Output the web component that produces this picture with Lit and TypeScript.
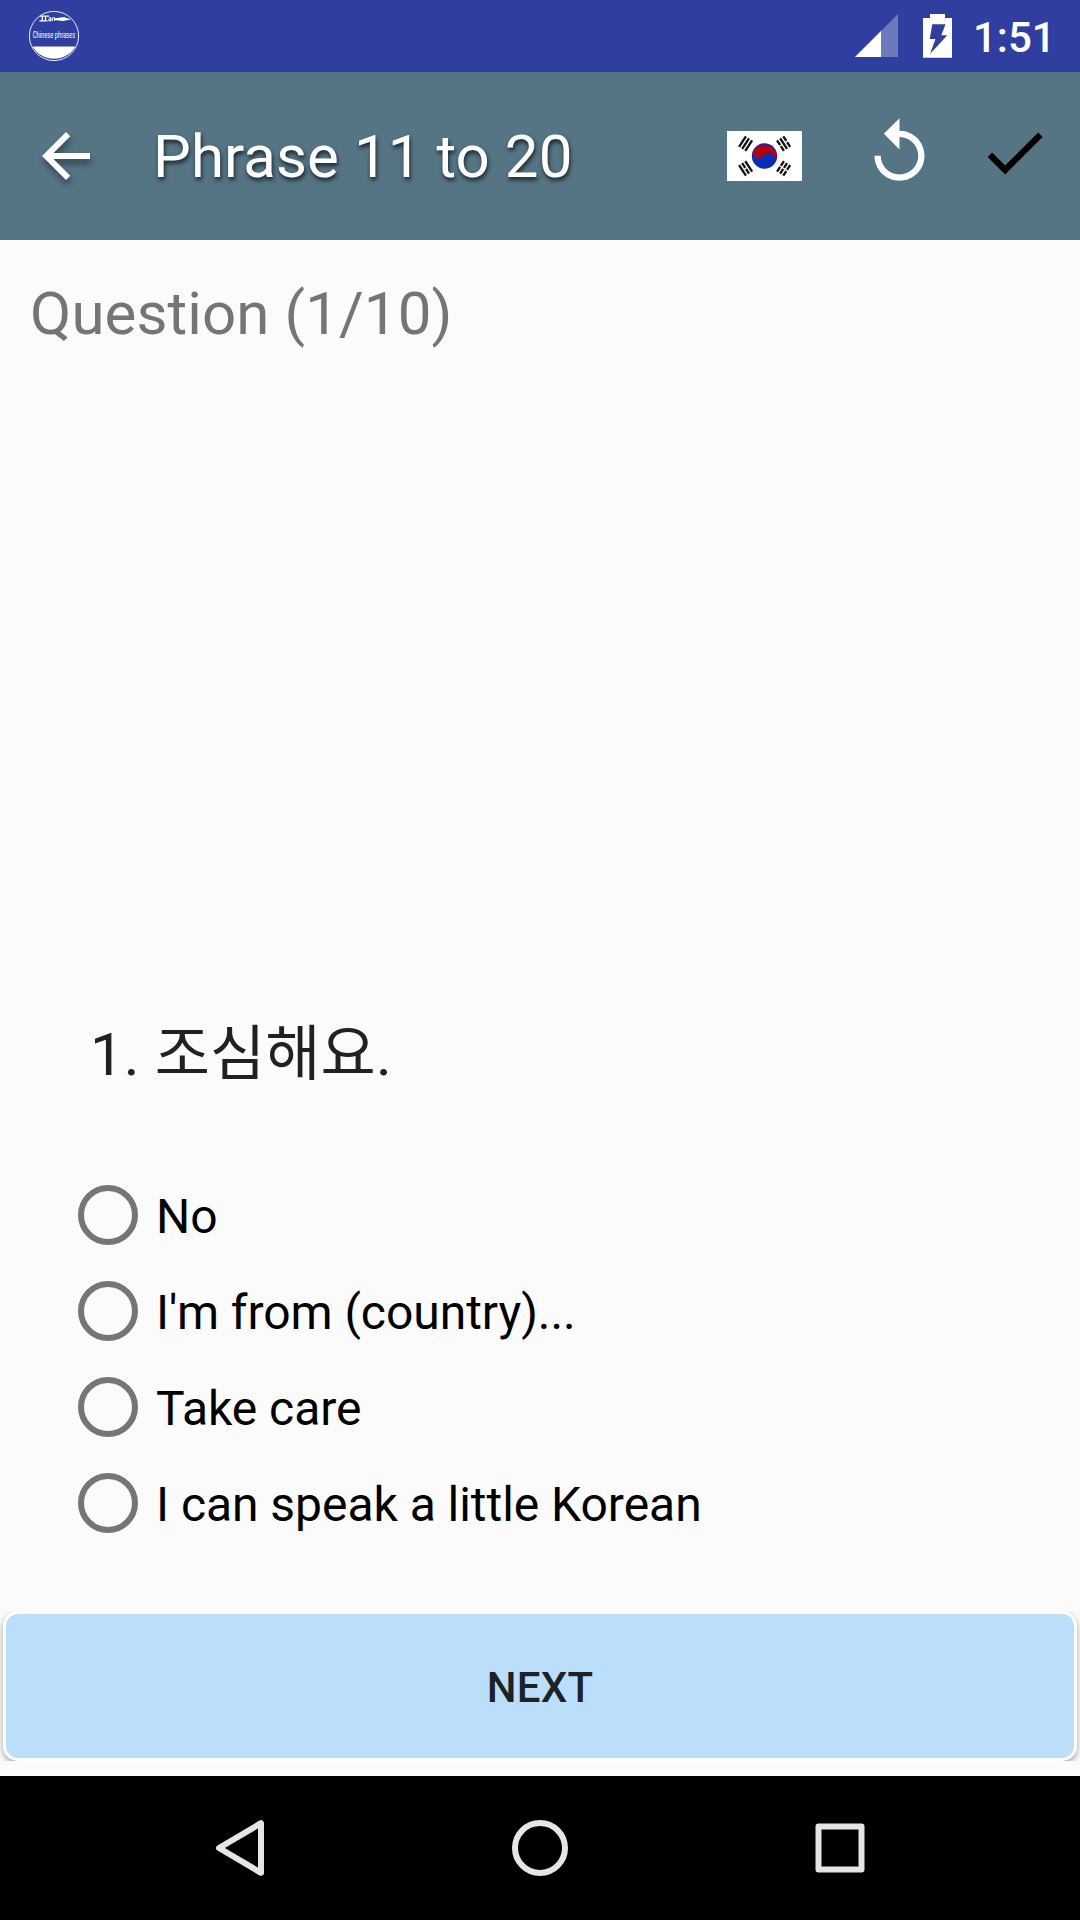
import { LitElement, html, css, svg } from "lit";
import { customElement, property, state } from "lit/decorators.js";

const FONT = css`Roboto, "Noto Sans CJK KR", sans-serif`;

@customElement("status-bar")
class StatusBar extends LitElement {
  static styles = css`
    :host {
      display: flex;
      align-items: flex-start;
      height: 72px;
      background: #303f9f;
      color: #fff;
      font-family: ${FONT};
    }
    svg { display: block; flex: none; }
    .logo { margin: 10px auto 0 28px; overflow: visible; }
    .signal { margin-top: 14px; }
    .battery { margin: 14px 0 0 25px; }
    .time {
      width: 107px;
      margin-left: 21px;
      font-size: 42px;
      font-weight: 500;
      line-height: 49px;
      padding-top: 13px;
    }
    .label { font-size: 6px; font-weight: 400; fill: #fff; }
  `;

  render() {
    return html`
      <svg class="logo" width="52" height="52" viewBox="0 0 52 52">
        <circle cx="26" cy="26" r="24.6" fill="none" stroke="#fff" stroke-width="0.9" />
        <path d="M4.6 36.6H47.4A24.8 24.8 0 0 1 4.6 36.6Z" fill="#fff" />
        <g fill="none" stroke="#fff">
          <path d="M12 6.2h9M11.500 10.800h8M14.300 6v4.800M17.500 6v4.800" stroke-width="1.3" />
          <path d="M20.800 7.800h2.200v3h-2.200v-1.400h2M24.400 11V7.800h2.200V11" stroke-width="1" />
        </g>
        <path d="M26 8.600L36 7L43 9.400L35 11L26 10Z" fill="#fff" />
        <text class="label" transform="translate(4.800 27.800) scale(1 1.500)" textLength="42.3" lengthAdjust="spacingAndGlyphs">Chinese phrases</text>
      </svg>
      <svg class="signal" width="43" height="43" viewBox="0 0 43 43">
        <path d="M43 0V43H0Z" fill="#fff" opacity="0.3" />
        <path d="M26 17V43H0Z" fill="#fff" />
      </svg>
      <svg class="battery" width="29" height="44" viewBox="0 0 29 44">
        <path
          fill="#fff"
          fill-rule="evenodd"
          d="M7 0H22V4H29V43.7H0V4H7ZM9.3 10.3L6.7 25H12.5L7 40L24.3 21.3H18.3L22.5 10.3Z"
        />
      </svg>
      <span class="time">1:51</span>
    `;
  }
}

const trigram = (x: number, y: number, angle: number, broken: boolean[]) => svg`
  <g transform="translate(${x} ${y}) rotate(${angle})" stroke="#111" stroke-width="2.3">
    ${broken.map((b, i) => {
      const o = (i - 1) * 3.7;
      return b
        ? svg`<path d="M${o} -6.300V-0.700M${o} 0.700V6.300" />`
        : svg`<path d="M${o} -6.300V6.300" />`;
    })}
  </g>
`;

@customElement("title-bar")
class TitleBar extends LitElement {
  @property() heading = "";

  static styles = css`
    :host {
      display: flex;
      align-items: flex-start;
      height: 168px;
      background: #557484;
      color: #fff;
      font-family: ${FONT};
    }
    svg { display: block; flex: none; }
    .back {
      margin: 48px 0 0 30px;
      overflow: visible;
      filter: drop-shadow(1px 5px 3px rgba(0, 0, 0, 0.4));
    }
    h1 {
      margin: 50px auto 0 51px;
      font-size: 60px;
      font-weight: 400;
      line-height: 70px;
      letter-spacing: 0.08px;
      white-space: nowrap;
      text-shadow: 1px 3px 4px rgba(0, 0, 0, 0.7);
    }
    .flag { margin-top: 59px; }
    .replay { margin: 43px 0 0 60px; }
    .done { margin: 43px 28px 0 40px; }
  `;

  render() {
    return html`
      <svg class="back" width="72" height="72" viewBox="0 0 24 24">
        <path fill="#fff" d="M20 11H7.83l5.59-5.59L12 4l-8 8 8 8 1.41-1.41L7.83 13H20v-2z" />
      </svg>
      <h1>${this.heading}</h1>
      <svg class="flag" width="75" height="50" viewBox="0 0 75 50">
        <rect width="75" height="50" fill="#fff" />
        <circle cx="37.5" cy="25" r="12.7" fill="#0a2db5" />
        <path d="M25.6 21.200A12.700 12.700 0 0 1 49.800 28C46.500 26 46 22 41.500 22C37 22.500 36.500 27 32 27C28.500 27.400 26 25.500 25.600 21.200Z" fill="#b10012" />
        ${trigram(18.6, 12.6, 33, [false, false, false])}
        ${trigram(56.6, 12.6, -33, [true, false, true])}
        ${trigram(18.6, 37.4, -33, [false, true, false])}
        ${trigram(56.6, 37.4, 33, [true, true, true])}
      </svg>
      <svg class="replay" width="75" height="75" viewBox="0 0 24 24">
        <path
          fill="#fff"
          d="M12 5V1L7 6l5 5V7c3.31 0 6 2.69 6 6s-2.69 6-6 6-6-2.69-6-6H4c0 4.42 3.58 8 8 8s8-3.58 8-8-3.58-8-8-8z"
        />
      </svg>
      <svg class="done" width="75" height="75" viewBox="0 0 24 24">
        <path fill="#000" d="M9 16.17L4.83 12l-1.42 1.41L9 19 21 7l-1.41-1.41z" />
      </svg>
    `;
  }
}

@customElement("nav-bar")
class NavBar extends LitElement {
  static styles = css`
    :host {
      display: flex;
      justify-content: center;
      align-items: center;
      gap: 228px;
      height: 144px;
      background: #000;
    }
    svg {
      display: block;
      fill: none;
      stroke: #e6e6e6;
      stroke-width: 6;
      stroke-linejoin: round;
    }
  `;

  render() {
    return html`
      <svg width="72" height="72" viewBox="0 0 72 72"><path d="M57 11.200V60.800L15 36Z" /></svg>
      <svg width="72" height="72" viewBox="0 0 72 72"><circle cx="36" cy="36" r="25" /></svg>
      <svg width="72" height="72" viewBox="0 0 72 72"><rect x="14.500" y="14.500" width="43" height="43" /></svg>
    `;
  }
}

@customElement("app-root")
class AppRoot extends LitElement {
  @state() private selected = -1;

  private options = ["No", "I'm from (country)...", "Take care", "I can speak a little Korean"];

  static styles = css`
    :host {
      display: flex;
      flex-direction: column;
      height: 1920px;
      overflow: hidden;
      background: #fbfbfb;
      font-family: ${FONT};
    }
    status-bar, title-bar, nav-bar { flex: none; }
    .progress {
      margin: 39px 0 0 30px;
      font-size: 60px;
      line-height: 70px;
      letter-spacing: 0.1px;
      color: #757575;
    }
    .prompt {
      margin: auto 0 0 90px;
      font-size: 60px;
      line-height: 70px;
      letter-spacing: 0.1px;
      color: #212121;
    }
    .options {
      display: flex;
      flex-direction: column;
      margin: 77px 0 60px 78px;
    }
    .option {
      display: flex;
      align-items: center;
      gap: 18px;
      height: 96px;
      font-size: 48px;
      line-height: 56px;
      letter-spacing: -0.04px;
      color: #000;
    }
    .ring {
      box-sizing: border-box;
      flex: none;
      width: 60px;
      height: 60px;
      border: 6px solid #757575;
      border-radius: 50%;
    }
    .option.on .ring { background: radial-gradient(#757575 14px, transparent 15px); }
    .text { padding-top: 3px; }
    .footer {
      flex: none;
      height: 150px;
      padding: 0 3px;
      margin-bottom: 15px;
      overflow: hidden;
    }
    .next {
      display: flex;
      justify-content: center;
      align-items: center;
      box-sizing: border-box;
      width: 100%;
      height: 150px;
      padding: 2px 0 0;
      border: 3px solid #fff;
      border-radius: 15px;
      background: #bbdefb;
      color: rgba(0, 0, 0, 0.87);
      font: 500 42px/49px ${FONT};
      letter-spacing: 0.2px;
      box-shadow: 0 3px 6px rgba(0, 0, 0, 0.35);
    }
  `;

  render() {
    return html`
      <status-bar></status-bar>
      <title-bar heading="Phrase 11 to 20"></title-bar>
      <div class="progress">Question (1/10)</div>
      <div class="prompt">1. 조심해요.</div>
      <div class="options">
        ${this.options.map(
          (o, i) => html`
            <div class="option ${this.selected === i ? "on" : ""}" @click=${() => (this.selected = i)}>
              <span class="ring"></span><span class="text">${o}</span>
            </div>
          `
        )}
      </div>
      <div class="footer"><button class="next">NEXT</button></div>
      <nav-bar></nav-bar>
    `;
  }
}
